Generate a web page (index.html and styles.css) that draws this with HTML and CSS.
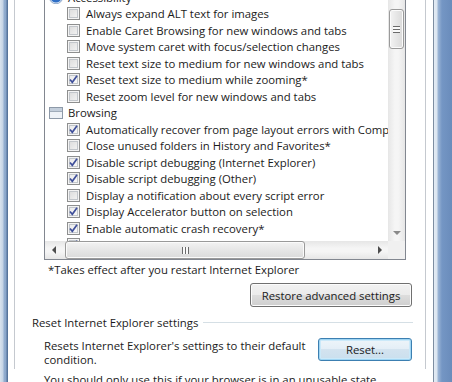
FILE: index.html
```html
<!DOCTYPE html>
<html lang="en">

<head>
    <meta charset="UTF-8">
    <meta name="viewport" content="width=device-width, initial-scale=1.0">
    <link rel="stylesheet" href="styles.css">
    <title>Internet Options - Advanced</title>
</head>

<body>
    <div class="screen">
        <div class="frame-left"></div>
        <div class="dialog">
            <div class="tab-page">
                <!-- settings list -->
                <div class="settings">
                    <div class="settings-view">
                        <div class="row category">
                            <svg class="cat-icon" width="14" height="14" viewBox="0 0 14 14">
                                <circle cx="7" cy="7" r="6.2" fill="#2f6fc6" stroke="#dfe9f6" stroke-width="1.2" />
                                <circle cx="7" cy="7" r="6.8" fill="none" stroke="#5a7fae" stroke-width="0.6" />
                            </svg>
                            <span>Accessibility</span>
                        </div>
                        <div class="row"><span class="check"></span>Always expand ALT text for images</div>
                        <div class="row"><span class="check"></span>Enable Caret Browsing for new windows and tabs</div>
                        <div class="row"><span class="check"></span>Move system caret with focus/selection changes</div>
                        <div class="row"><span class="check"></span>Reset text size to medium for new windows and tabs</div>
                        <div class="row"><span class="check on"><svg viewBox="0 0 11 11"><path d="M2 5.5 L4.3 8.3 L9 1.8" /></svg></span>Reset text size to medium while zooming*</div>
                        <div class="row"><span class="check"></span>Reset zoom level for new windows and tabs</div>
                        <div class="row category">
                            <svg class="cat-icon" width="14" height="12" viewBox="0 0 14 12">
                                <rect x="0.5" y="0.5" width="13" height="11" fill="#eef2f7" stroke="#8d99a8" />
                                <rect x="1" y="1" width="12" height="3" fill="#c3cedb" />
                                <line x1="1" y1="4.5" x2="13" y2="4.5" stroke="#9fabb9" />
                            </svg>
                            <span>Browsing</span>
                        </div>
                        <div class="row"><span class="check on"><svg viewBox="0 0 11 11"><path d="M2 5.5 L4.3 8.3 L9 1.8" /></svg></span>Automatically recover from page layout errors with Compatibility View</div>
                        <div class="row"><span class="check"></span>Close unused folders in History and Favorites*</div>
                        <div class="row"><span class="check on"><svg viewBox="0 0 11 11"><path d="M2 5.5 L4.3 8.3 L9 1.8" /></svg></span>Disable script debugging (Internet Explorer)</div>
                        <div class="row"><span class="check on"><svg viewBox="0 0 11 11"><path d="M2 5.5 L4.3 8.3 L9 1.8" /></svg></span>Disable script debugging (Other)</div>
                        <div class="row"><span class="check"></span>Display a notification about every script error</div>
                        <div class="row"><span class="check on"><svg viewBox="0 0 11 11"><path d="M2 5.5 L4.3 8.3 L9 1.8" /></svg></span>Display Accelerator button on selection</div>
                        <div class="row"><span class="check on"><svg viewBox="0 0 11 11"><path d="M2 5.5 L4.3 8.3 L9 1.8" /></svg></span>Enable automatic crash recovery*</div>
                        <div class="row"><span class="check on"><svg viewBox="0 0 11 11"><path d="M2 5.5 L4.3 8.3 L9 1.8" /></svg></span>Enable flip ahead with page prediction</div>
                    </div>
                    <div class="vscroll">
                        <div class="arrow-btn"><span class="tri up"></span></div>
                        <div class="vtrack">
                            <div class="vthumb"><span class="grip-h"></span></div>
                        </div>
                        <div class="arrow-btn"><span class="tri down"></span></div>
                    </div>
                    <div class="hscroll">
                        <div class="arrow-btn"><span class="tri left"></span></div>
                        <div class="htrack">
                            <div class="hthumb"><span class="grip-v"></span></div>
                        </div>
                        <div class="arrow-btn"><span class="tri right"></span></div>
                    </div>
                    <div class="corner"></div>
                </div>

                <p class="note">*Takes effect after you restart Internet Explorer</p>
                <div class="btn-row">
                    <button type="button" class="btn">Restore advanced settings</button>
                </div>

                <div class="group-title">
                    <span>Reset Internet Explorer settings</span>
                    <div class="group-line"></div>
                </div>
                <div class="group-body">
                    <p class="group-text">Resets Internet Explorer's settings to their default<br>condition.</p>
                    <button type="button" class="btn btn-default">Reset...</button>
                </div>
                <p class="group-text warn">You should only use this if your browser is in an unusable state.</p>
            </div>
        </div>
        <div class="frame-right"></div>
    </div>
</body>

</html>
```

FILE: styles.css
```css
body {
    margin: 0;
    font-family: 'Open Sans', 'Noto Sans', sans-serif;
    font-size: 11.35px;
    color: #1b1b1b;
}

.screen {
    display: flex;
    width: 452px;
    height: 382px;
    overflow: hidden;
    background-color: #fff;
}

.frame-left {
    width: 8px;
    flex-shrink: 0;
    background: linear-gradient(to right, #d9e3ee 0px, #c4d3e4 3px, #93aed0 4px, #8aa6ca 6px, #56749b 7px, #56749b 8px);
}

.frame-right {
    width: 19px;
    flex-shrink: 0;
    background: linear-gradient(to right, #7d8da1 0px, #7d8da1 1px, #e3ebf4 1px, #dbe5f0 4px, #9db6d6 5px, #7496c4 9px, #6a8cbb 19px);
}

.dialog {
    flex: 1;
    padding: 0 7px 0 6px;
}

.tab-page {
    border-left: 1px solid #c5c9cf;
    border-right: 1px solid #c5c9cf;
    height: 100%;
    box-sizing: border-box;
}

/* the list box */
.settings {
    display: grid;
    grid-template-columns: 1fr 17px;
    grid-template-rows: 1fr 18px;
    width: 362px;
    height: 273px;
    box-sizing: border-box;
    margin: -13px 0 0 29px;
    border: 1px solid #828790;
    background-color: #fff;
}

.settings-view {
    overflow: hidden;
    padding-top: 1px;
    white-space: nowrap;
}

.row {
    display: flex;
    align-items: center;
    height: 16.5px;
    padding-left: 22px;
}

.row.category {
    padding-left: 4px;
}

.cat-icon {
    margin-right: 5px;
    flex-shrink: 0;
}

.check {
    width: 11px;
    height: 11px;
    margin-right: 6px;
    flex-shrink: 0;
    border: 1px solid #8e8f8f;
    background: linear-gradient(135deg, #d8d8d8, #f7f7f7);
    box-shadow: inset 0 0 0 1px #f4f4f4, inset 0 0 0 2px #c2c6cb;
    position: relative;
}

.check.on {
    background: linear-gradient(135deg, #e8e8e8, #fbfbfb);
}

.check svg {
    position: absolute;
    left: 0;
    top: 0;
    width: 11px;
    height: 11px;
}

.check path {
    fill: none;
    stroke: #3f4f9a;
    stroke-width: 1.7;
}

/* scroll bars */
.vscroll {
    display: flex;
    flex-direction: column;
    background: linear-gradient(to right, #e6e6e6, #f5f5f5 40%, #f5f5f5 60%, #e6e6e6);
}

.vtrack {
    flex: 1;
    padding-top: 4px;
}

.vthumb {
    height: 38px;
    margin: 0 1px;
    border: 1px solid #9a9a9a;
    border-radius: 3px;
    background: linear-gradient(to right, #f3f3f3, #e6e6e6 50%, #dadada);
    box-shadow: inset 0 0 0 1px #fbfbfb;
    display: flex;
    align-items: center;
    justify-content: center;
}

.grip-h {
    width: 7px;
    height: 7px;
    background: repeating-linear-gradient(to bottom, #6b6b6b 0, #6b6b6b 1px, #fafafa 1px, #fafafa 3px);
}

.arrow-btn {
    width: 17px;
    height: 17px;
    display: flex;
    align-items: center;
    justify-content: center;
    flex-shrink: 0;
}

.hscroll {
    display: flex;
    background: linear-gradient(to bottom, #e6e6e6, #f5f5f5 40%, #f5f5f5 60%, #e6e6e6);
}

.hscroll .arrow-btn {
    height: 18px;
}

.htrack {
    flex: 1;
    padding-left: 3px;
}

.hthumb {
    width: 238px;
    height: 16px;
    border: 1px solid #9a9a9a;
    border-radius: 3px;
    background: linear-gradient(to bottom, #f3f3f3, #e6e6e6 50%, #dadada);
    box-shadow: inset 0 0 0 1px #fbfbfb;
    display: flex;
    align-items: center;
    justify-content: center;
}

.grip-v {
    width: 7px;
    height: 7px;
    background: repeating-linear-gradient(to right, #6b6b6b 0, #6b6b6b 1px, #fafafa 1px, #fafafa 3px);
}

.corner {
    background-color: #f0f0f0;
}

.tri {
    width: 0;
    height: 0;
    border: 4px solid transparent;
}

.tri.up {
    border-bottom-color: #4d4d4d;
    border-top-width: 0;
}

.tri.down {
    border-top-color: #8a8a8a;
    border-bottom-width: 0;
}

.tri.left {
    border-right-color: #4d4d4d;
    border-left-width: 0;
}

.tri.right {
    border-left-color: #4d4d4d;
    border-right-width: 0;
}

/* text under the list */
.note {
    margin: 2px 0 0 33px;
    line-height: 16px;
}

.btn-row {
    display: flex;
    justify-content: flex-end;
    margin: 5px 13px 0 0;
}

.btn {
    font-family: inherit;
    font-size: 11.35px;
    color: #1b1b1b;
    height: 24px;
    padding: 0;
    border: 1px solid #707070;
    border-radius: 3px;
    background: linear-gradient(to bottom, #f2f2f2, #ebebeb 50%, #dddddd 50%, #cfcfcf);
    box-shadow: inset 0 0 0 1px #fcfcfc;
}

.btn-row .btn {
    width: 162px;
}

.btn-default {
    width: 94px;
    height: 23px;
    border-color: #3c7fb1;
    background: linear-gradient(to bottom, #eef5fa, #e3eef6 50%, #d3e3ef 50%, #cadfee);
    box-shadow: inset 0 0 0 1px #9fd5f3, inset 0 0 0 2px #cbe9f9;
}

.group-title {
    display: flex;
    align-items: center;
    margin: 8px 12px 0 17px;
    line-height: 15px;
}

.group-line {
    flex: 1;
    height: 0;
    border-top: 1px solid #d5dfe5;
    margin: 0 0 1px 5px;
}

.group-body {
    display: flex;
    justify-content: space-between;
    align-items: flex-start;
    margin: 8px 13px 0 29px;
}

.group-text {
    margin: 1px 0 0 0;
    line-height: 13.5px;
}

.group-text.warn {
    margin: 7px 0 0 29px;
}
```
